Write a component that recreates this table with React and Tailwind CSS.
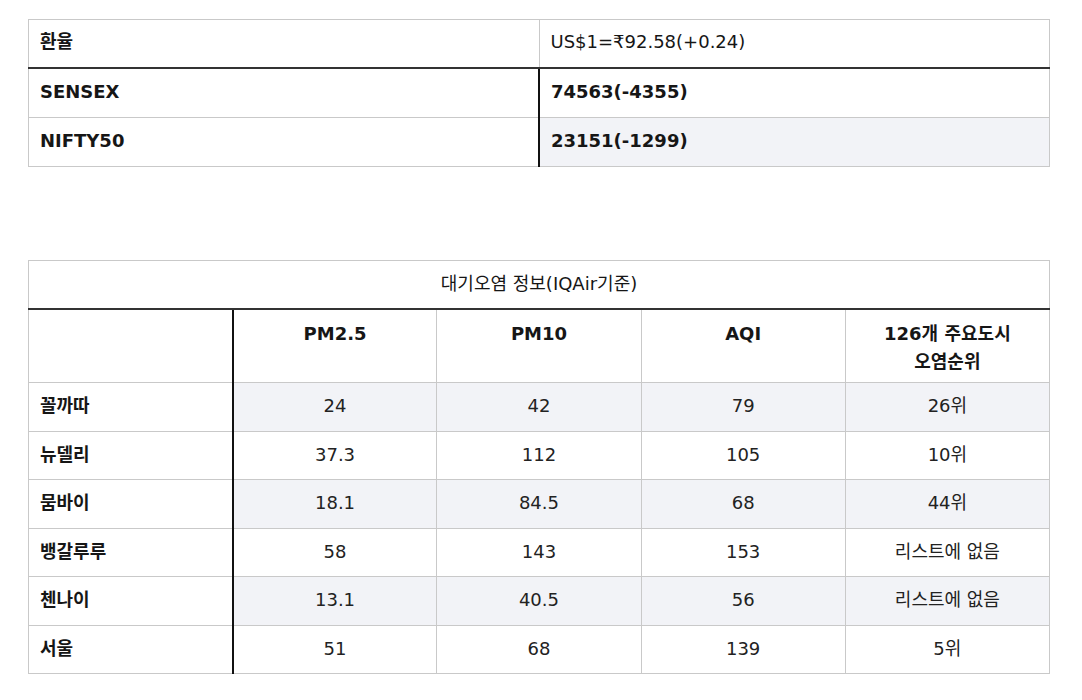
import React from 'react'

const grey = 'border-[#c9c9c9]'

const cities = [
    { name: '꼴까따', pm25: '24', pm10: '42', aqi: '79', rank: '26위' },
    { name: '뉴델리', pm25: '37.3', pm10: '112', aqi: '105', rank: '10위' },
    { name: '뭄바이', pm25: '18.1', pm10: '84.5', aqi: '68', rank: '44위' },
    { name: '뱅갈루루', pm25: '58', pm10: '143', aqi: '153', rank: '리스트에 없음' },
    { name: '첸나이', pm25: '13.1', pm10: '40.5', aqi: '56', rank: '리스트에 없음' },
    { name: '서울', pm25: '51', pm10: '68', aqi: '139', rank: '5위' },
]

const App = () => {
    return (
        <div className="min-h-screen bg-white pl-[28px] pt-[19px] text-[#161616] font-['DejaVu_Sans','Noto_Sans_CJK_KR',sans-serif] text-[18px]">
            {/* 환율 / 지수 */}
            <table className={`w-[1022px] table-fixed border-collapse border ${grey}`}>
                <tbody>
                    <tr>
                        <td className={`w-1/2 border-r ${grey} border-b-2 border-b-[#333] px-[11px] pt-[8px] pb-[11px] leading-[28px] align-top font-bold`}>
                            환율
                        </td>
                        <td className="border-b-2 border-b-[#333] px-[11px] pt-[8px] pb-[11px] leading-[28px] align-top">
                            US$1=₹92.58(+0.24)
                        </td>
                    </tr>
                    <tr>
                        <td className={`border-r-2 border-r-[#111] border-b ${grey} px-[11px] pt-[9px] pb-[11px] leading-[28px] align-top font-bold`}>
                            SENSEX
                        </td>
                        <td className={`border-b ${grey} px-[11px] pt-[9px] pb-[11px] leading-[28px] align-top font-bold`}>
                            74563(-4355)
                        </td>
                    </tr>
                    <tr>
                        <td className="border-r-2 border-r-[#111] px-[11px] pt-[9px] pb-[11px] leading-[28px] align-top font-bold">
                            NIFTY50
                        </td>
                        <td className="bg-[#f2f3f7] px-[11px] pt-[9px] pb-[11px] leading-[28px] align-top font-bold">
                            23151(-1299)
                        </td>
                    </tr>
                </tbody>
            </table>

            {/* 대기오염 정보 */}
            <table className={`mt-[93px] w-[1022px] table-fixed border-collapse border ${grey}`}>
                <tbody>
                    <tr>
                        <td colSpan={5} className="border-b-2 border-b-[#333] pt-[9px] pb-[10px] leading-[28px] text-center">
                            대기오염 정보(IQAir기준)
                        </td>
                    </tr>
                    <tr>
                        <td className={`w-1/5 border-r-2 border-r-[#111] border-b ${grey}`}></td>
                        {['PM2.5', 'PM10', 'AQI'].map((h) => (
                            <td key={h} className={`w-1/5 border-r border-b ${grey} px-[11px] pt-[10px] pb-[6px] leading-[28px] align-top text-center font-bold`}>
                                {h}
                            </td>
                        ))}
                        <td className={`w-1/5 border-b ${grey} px-[11px] pt-[10px] pb-[6px] leading-[28px] align-top text-center font-bold`}>
                            126개 주요도시<br />오염순위
                        </td>
                    </tr>
                    {cities.map((c, i) => {
                        const shade = i % 2 === 0 ? 'bg-[#f2f3f7]' : ''
                        const last = i === cities.length - 1
                        const pad = 'px-[11px] pt-[9px] pb-[10.5px] leading-[28px] align-top'
                        const cell = `${last ? '' : 'border-b'} ${grey} ${shade} ${pad} text-center text-[#222]`
                        return (
                            <tr key={c.name}>
                                <td className={`border-r-2 border-r-[#111] ${last ? '' : 'border-b'} ${grey} ${pad} font-bold`}>
                                    {c.name}
                                </td>
                                <td className={`border-r ${cell}`}>{c.pm25}</td>
                                <td className={`border-r ${cell}`}>{c.pm10}</td>
                                <td className={`border-r ${cell}`}>{c.aqi}</td>
                                <td className={cell}>{c.rank}</td>
                            </tr>
                        )
                    })}
                </tbody>
            </table>
        </div>
    )
}

export default App
